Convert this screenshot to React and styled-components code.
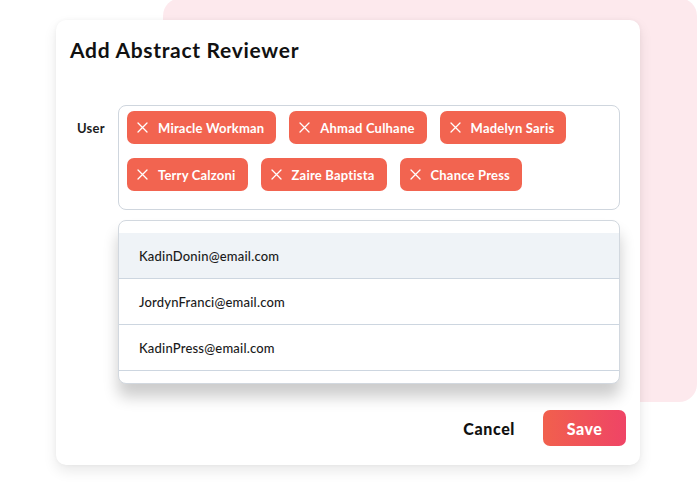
import React from 'react';
import styled, { createGlobalStyle } from 'styled-components';

const GlobalStyle = createGlobalStyle`
  html, body {
    margin: 0;
    padding: 0;
    background: #ffffff;
    font-family: Lato, "Open Sans", "Liberation Sans", sans-serif;
    -webkit-font-smoothing: antialiased;
  }
`;

const Stage = styled.div`
  position: relative;
  width: 698px;
  height: 487px;
  overflow: hidden;
  padding: 20px 0 0 56px;
  box-sizing: border-box;
`;

// decorative pink block sitting behind the dialog
const Backdrop = styled.div`
  position: absolute;
  left: 163px;
  top: -2px;
  width: 534px;
  height: 404px;
  border-radius: 18px;
  background: #fde9ed;
`;

const Card = styled.div`
  position: relative;
  width: 584px;
  height: 445px;
  box-sizing: border-box;
  background: #ffffff;
  border-radius: 10px;
  box-shadow: 0 6px 14px rgba(0, 0, 0, 0.09), 0 0 4px rgba(0, 0, 0, 0.04);
  padding: 18px 14px 19px 14px;
  display: flex;
  flex-direction: column;
`;

const Title = styled.h1`
  margin: 0;
  font-size: 21px;
  line-height: 24px;
  font-weight: 700;
  color: #111111;
  letter-spacing: 0.7px;
`;

const FieldRow = styled.div`
  display: flex;
  margin-top: 43px;
  padding-left: 7px;
`;

const Label = styled.div`
  width: 41px;
  flex-shrink: 0;
  padding-top: 15px;
  font-size: 13px;
  font-weight: 700;
  color: #1d1d1d;
  letter-spacing: 0.2px;
`;

const Fields = styled.div`
  display: flex;
  flex-direction: column;
  gap: 10px;
  width: 502px;
`;

const TagBox = styled.div`
  display: flex;
  flex-wrap: wrap;
  gap: 14px 13px;
  padding: 5px 8px 18px 8px;
  border: 1px solid #cfd6de;
  border-radius: 8px;
`;

const Tag = styled.div`
  display: flex;
  align-items: center;
  height: 33px;
  padding: 0 12px 0 10px;
  border-radius: 7px;
  background: #f26450;
  color: #ffffff;
  font-size: 13px;
  font-weight: 700;
  letter-spacing: 0.2px;
  gap: 10px;
`;

const Dropdown = styled.div`
  height: 164px;
  box-sizing: border-box;
  padding-top: 12px;
  border: 1px solid #d2d8df;
  border-radius: 8px;
  background: #ffffff;
  box-shadow: 0 13px 15px rgba(0, 0, 0, 0.2);
  overflow: hidden;
`;

const Option = styled.div`
  height: 46px;
  box-sizing: border-box;
  display: flex;
  align-items: center;
  padding-left: 20px;
  border-bottom: 1px solid #cdd6e0;
  background: ${p => (p.$active ? '#eff3f7' : '#ffffff')};
  font-size: 13px;
  font-weight: 500;
  letter-spacing: 0.2px;
  color: #1a1a1a;
`;

const Footer = styled.div`
  margin-top: auto;
  display: flex;
  justify-content: flex-end;
  align-items: center;
  gap: 28px;
`;

const CancelButton = styled.button`
  border: none;
  background: none;
  padding: 0;
  font-family: inherit;
  font-size: 16px;
  font-weight: 900;
  letter-spacing: 0.6px;
  color: #111111;
`;

const SaveButton = styled.button`
  width: 83px;
  height: 36px;
  border: none;
  border-radius: 7px;
  background: linear-gradient(90deg, #f1604d 0%, #ef4466 100%);
  font-family: inherit;
  font-size: 16px;
  font-weight: 900;
  letter-spacing: 0.5px;
  color: #ffffff;
`;

const CloseIcon = () => (
  <svg width="11" height="11" viewBox="0 0 11 11" fill="none">
    <path d="M1 1 L10 10 M10 1 L1 10" stroke="#ffffff" strokeWidth="1.3" strokeLinecap="round" />
  </svg>
);

const users = [
  'Miracle Workman',
  'Ahmad Culhane',
  'Madelyn Saris',
  'Terry Calzoni',
  'Zaire Baptista',
  'Chance Press',
];

const emails = [
  'KadinDonin@email.com',
  'JordynFranci@email.com',
  'KadinPress@email.com',
];

const App = () => (
  <>
    <GlobalStyle />
    <Stage>
      <Backdrop />
      <Card>
        <Title>Add Abstract Reviewer</Title>
        <FieldRow>
          <Label>User</Label>
          <Fields>
            <TagBox>
              {users.map(name => (
                <Tag key={name}>
                  <CloseIcon />
                  {name}
                </Tag>
              ))}
            </TagBox>
            <Dropdown>
              {emails.map((email, i) => (
                <Option key={email} $active={i === 0}>{email}</Option>
              ))}
            </Dropdown>
          </Fields>
        </FieldRow>
        <Footer>
          <CancelButton>Cancel</CancelButton>
          <SaveButton>Save</SaveButton>
        </Footer>
      </Card>
    </Stage>
  </>
);

export default App;
